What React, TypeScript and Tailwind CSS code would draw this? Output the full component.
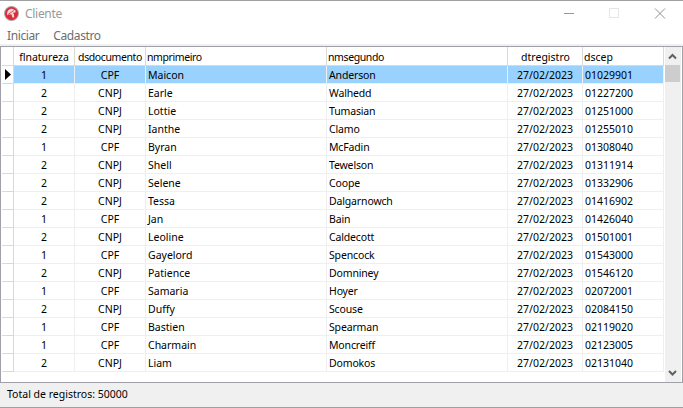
import React from "react";

type Row = [string, string, string, string, string, string];

const D = "27/02/2023";
const rows: Row[] = [
  ["1", "CPF", "Maicon", "Anderson", D, "01029901"],
  ["2", "CNPJ", "Earle", "Walhedd", D, "01227200"],
  ["2", "CNPJ", "Lottie", "Tumasian", D, "01251000"],
  ["2", "CNPJ", "Ianthe", "Clamo", D, "01255010"],
  ["1", "CPF", "Byran", "McFadin", D, "01308040"],
  ["2", "CNPJ", "Shell", "Tewelson", D, "01311914"],
  ["2", "CNPJ", "Selene", "Coope", D, "01332906"],
  ["2", "CNPJ", "Tessa", "Dalgarnowch", D, "01416902"],
  ["1", "CPF", "Jan", "Bain", D, "01426040"],
  ["2", "CNPJ", "Leoline", "Caldecott", D, "01501001"],
  ["1", "CPF", "Gayelord", "Spencock", D, "01543000"],
  ["2", "CNPJ", "Patience", "Domniney", D, "01546120"],
  ["1", "CPF", "Samaria", "Hoyer", D, "02072001"],
  ["2", "CNPJ", "Duffy", "Scouse", D, "02084150"],
  ["1", "CPF", "Bastien", "Spearman", D, "02119020"],
  ["1", "CPF", "Charmain", "Moncreiff", D, "02123005"],
  ["2", "CNPJ", "Liam", "Domokos", D, "02131040"],
];

const headers = ["flnatureza", "dsdocumento", "nmprimeiro", "nmsegundo", "dtregistro", "dscep"];

const align = [
  "justify-center",
  "justify-center",
  "justify-start pl-[2px]",
  "justify-start pl-[2px] tracking-[-0.15px]",
  "justify-center",
  "justify-start pl-[2px]",
];
const headAlign = [
  "justify-center",
  "justify-center tracking-[-0.4px]",
  "justify-start pl-px tracking-[-0.4px]",
  "justify-start pl-px tracking-[-0.4px]",
  "justify-center pl-px",
  "justify-start pl-px",
];

const rowGrid = "grid h-[18px] shrink-0 grid-cols-[12px_61px_71px_181px_181px_75px_81px]";

function TitleBar() {
  return (
    <div className="flex h-[26px] shrink-0 items-center border-t border-[#a0a0a0] bg-white pl-[4px]">
      <svg className="size-[15px]" viewBox="0 0 15 15">
        <circle cx="7.5" cy="7.5" r="7.4" fill="#a99c9d" />
        <circle cx="7.5" cy="7.5" r="6.5" fill="#dc2a38" />
        <path d="M3.2 9.2C2.400 5.200 5 2.600 8.200 2.800l3.400 1.600-.2 2-2.400.4 1 1.800.2 3.200-2-.6-.6-2.600-1.600-.4z" fill="#f6d3d5" />
        <path d="M4 8.400 9.800 4.600" stroke="#dc2a38" strokeWidth=".8" />
      </svg>
      <span className="ml-[6px] grow text-[12px] leading-[16px] tracking-[-0.3px] text-[#999]">Cliente</span>
      <svg className="h-[25px] w-[120px]" viewBox="0 0 120 25" fill="none" shapeRendering="crispEdges">
        <path d="M1 12.5h10" stroke="#999" />
        <rect x="46.500" y="7.500" width="9" height="9" stroke="#e6e6e6" />
        <path d="M92 7.500l10 10M102 7.500l-10 10" stroke="#909090" shapeRendering="auto" />
      </svg>
    </div>
  );
}

function Chevron({ up }: { up?: boolean }) {
  return (
    <svg className="h-[17px] w-[16px] shrink-0" viewBox="0 0 16 17" fill="none">
      <path d={up ? "M4 11.500 7.500 8 11 11.500" : "M4 6 7.500 9.500 11 6"} stroke="#606060" strokeWidth="2" />
    </svg>
  );
}

export default function App() {
  return (
    <div className="flex h-[408px] w-[683px] flex-col overflow-hidden bg-[#f0f0f0] font-['Noto_Sans',sans-serif] text-[10.5px] leading-[16px] text-black">
      <TitleBar />
      <div className="flex h-[18px] shrink-0 items-center gap-[14px] bg-white pt-[2px] pl-[7px] text-[12px] tracking-[-0.4px] text-[#6d6d6d]">
        <span>Iniciar</span>
        <span>Cadastro</span>
      </div>
      <div className="mt-[2px] flex h-[337px] shrink-0 border border-[#a0a0a8] bg-white pl-px">
        <div className="flex w-[662px] shrink-0 flex-col">
          <div className="grid h-[19px] shrink-0 grid-cols-[12px_61px_71px_181px_181px_75px_81px]">
            <div className="border-r border-b border-[#d9d9d9]" />
            {headers.map((h, i) => (
              <div key={h} className={"flex items-center border-r border-b border-[#d9d9d9] pt-[2px] whitespace-nowrap " + headAlign[i]}>
                {h}
              </div>
            ))}
          </div>
          {rows.map((r, n) => (
            <div key={n} className={rowGrid}>
              <div className="flex items-center border-r border-b border-[#d9d9d9] pl-[3px]">
                {n === 0 && (
                  <svg className="h-[11px] w-[6px]" viewBox="0 0 6 11">
                    <path d="M0 0l6 5.500-6 5.500z" fill="#000" />
                  </svg>
                )}
              </div>
              {r.map((c, i) => (
                <div key={i} className={"flex items-center border-r border-b border-[#efefef] whitespace-nowrap " + align[i] + (n === 0 ? " bg-[#99d1ff]" : "")}>
                  {c}
                </div>
              ))}
            </div>
          ))}
        </div>
        <div className="ml-px flex w-[16px] shrink-0 flex-col bg-[#f0f0f0]">
          <Chevron up />
          <div className="mt-px h-[17px] w-[15px] bg-[#cdcdcd]" />
          <div className="grow" />
          <Chevron />
        </div>
      </div>
      <div className="flex grow items-center border-b border-[#a0a0a0] pb-[2px] pl-[7px]">Total de registros: 50000</div>
    </div>
  );
}
